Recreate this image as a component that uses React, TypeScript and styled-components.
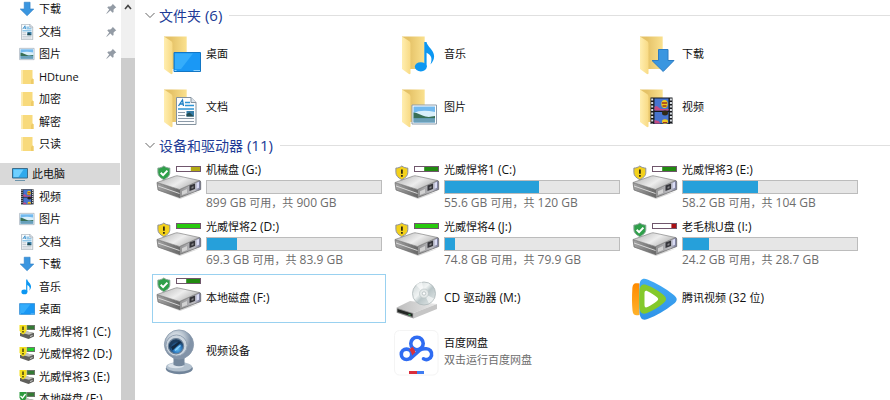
import React from "react";
import styled, { createGlobalStyle } from "styled-components";

const GlobalStyle = createGlobalStyle`
  * { box-sizing: border-box; }
  body {
    margin: 0;
    background: #fff;
    color: #111;
    font-family: "Open Sans", "Noto Sans CJK SC", sans-serif;
    font-size: 11px;
  }
  ul { list-style: none; margin: 0; padding: 0; }
  svg { display: block; flex: none; }
`;

const Window = styled.div`
  display: flex;
  height: 100vh;
  overflow: hidden;
`;

const Sidebar = styled.nav`
  flex: 0 0 121px;
  overflow: hidden;
  margin-top: -2px;
`;

const TreeGroup = styled.ul`
  margin-bottom: 8px;
`;

const TreeRow = styled.li`
  display: flex;
  height: 22px;
  &:nth-child(even) { height: 23px; }
`;

const TreeLink = styled.a<{ $root?: boolean }>`
  display: flex;
  align-items: center;
  gap: 4px;
  flex: 1;
  margin-right: 1px;
  padding: 0 3px 0 ${(p) => (p.$root ? 12 : 19)}px;
  background: ${(p) => (p.$root ? "#d9d9d9" : "transparent")};
  color: inherit;
  text-decoration: none;
  white-space: nowrap;
`;

const TreeName = styled.span`
  flex: 1;
  line-height: 20px;
`;

const Scrollbar = styled.div`
  flex: 0 0 14px;
  display: flex;
  flex-direction: column;
  background: #f0f0f0;
`;

const ScrollUp = styled.button`
  display: flex;
  justify-content: center;
  align-items: center;
  height: 14px;
  padding: 0;
  border: 0;
  background: #f0f0f0;
`;

const ScrollThumb = styled.div`
  flex: 1;
  margin-top: 44px;
  background: #cdcdcd;
`;

const Main = styled.main`
  flex: 1;
  min-width: 0;
  display: flex;
  flex-direction: column;
  gap: 4px;
  padding-top: 6px;
  overflow: hidden;
`;

const GroupButton = styled.button`
  display: flex;
  align-items: center;
  height: 20px;
  padding: 0 0 1px 10px;
  border: 0;
  background: none;
  color: #203a96;
  font: inherit;
  font-size: 14px;
  white-space: nowrap;
  &::after {
    content: "";
    flex: 1;
    height: 1px;
    margin-left: 7px;
    background: #e0e0e0;
  }
`;

const GroupTitle = styled.span`
  margin-left: 4px;
  padding-bottom: 1px;
  line-height: 18px;
`;

const Tiles = styled.ul`
  display: grid;
  grid-template-columns: repeat(auto-fill, 234px);
  gap: 4px;
  padding-left: 17px;
`;

const Tile = styled.button<{ $selected?: boolean }>`
  display: flex;
  align-items: center;
  gap: 4px;
  width: 100%;
  min-height: 49px;
  padding: 0 4px 0 2px;
  border: 0;
  background: none;
  box-shadow: ${(p) => (p.$selected ? "inset 0 0 0 1px #99d1f0" : "none")};
  color: inherit;
  font: inherit;
  text-align: left;
  white-space: nowrap;
`;

const TileBody = styled.span`
  display: flex;
  flex-direction: column;
  flex: 1;
  padding-bottom: 2px;
  line-height: 17px;
`;

const DriveBody = styled(TileBody)`
  line-height: 20px;
  padding-bottom: 1px;
`;

const Detail = styled.span`
  color: #6d6d6d;
`;

const DriveDetail = styled(Detail)`
  line-height: 18px;
`;

const Capacity = styled.span`
  display: block;
  height: 14px;
  border: 1px solid #bcbcbc;
  background: #e6e6e6;
`;

const Used = styled.span`
  display: block;
  height: 100%;
  background: #26a0da;
`;

const LatinRun = styled.span<{ $heading?: boolean }>`
  font-size: ${(p) => (p.$heading ? 15 : 12)}px;
`;

/* Latin runs beside Chinese are set one size larger so both scripts look even. */
function Label({ text, heading }: { text: string; heading?: boolean }) {
  const parts = text.split(/([\x20-\x7e]+)/).filter(Boolean);
  if (parts.length === 1) return <>{text}</>;
  return (
    <>
      {parts.map((part, i) =>
        /^[\x20-\x7e]/.test(part) ? (
          <LatinRun key={i} $heading={heading}>{part}</LatinRun>
        ) : (
          part
        )
      )}
    </>
  );
}

type Kind = "desktop" | "music" | "download" | "document" | "picture" | "video";
type Status = "ok" | "warn";

/* ---------- overlays shared by the folder icons ---------- */

const DownloadArt = () => (
  <path d="M28.5 18.5h9.5v11h6L33.2 40.5 22 29.5h6.5z" fill="#3a96e0" stroke="#2b7cc4" />
);
const MusicArt = () => (
  <>
    <ellipse cx="28.8" cy="35.8" rx="6" ry="4.6" fill="#0c97f2" />
    <path d="M32.3 11h2.2c.8 4.8 7.6 7.8 7.6 14.2 0 3.300-1.600 6.200-3.600 8.200 2-5.600 1-9.400-3.900-11.600V36h-2.300z" fill="#0c97f2" />
  </>
);
const DesktopArt = () => (
  <>
    <path d="M20 21.500h26.500v19H20z" fill="#1a98f5" stroke="#1276c4" />
    <path d="M21 22.500h18L27 38h-6z" fill="#35adfb" />
    <path d="M20.500 39.500h25.500" stroke="#8ed3ff" strokeDasharray="2 17 7" />
  </>
);
const DocumentArt = () => (
  <>
    <path d="M22.500 13.500h14.500l5 5V40.500H22.500z" fill="#fcfdfe" stroke="#84929e" />
    <path d="M37 13.500v5h5" fill="#dde5ec" stroke="#84929e" />
    <path d="M24.500 22l4-6 1 6M26 20h3" fill="none" stroke="#1d7fc4" strokeWidth="1.300" />
    <path d="M31 18.500h5M31 21.500h9M24 25h16" stroke="#2d94d4" strokeWidth="1.400" />
    <path d="M24 28.500h7M24 31.500h7M24 34.500h16M24 37.500h16" stroke="#8c9aa8" />
    <path d="M32.500 27h7.500v5.500h-7.500z" fill="#367da8" />
    <path d="M32.500 32.500v-2.500l3-1.500 4.500 4z" fill="#254d53" />
  </>
);
const PictureArt = () => (
  <>
    <path d="M20 21h24.500v19H20z" fill="#fff" stroke="#8c9cab" />
    <path d="M21.500 22.500h21.500v16H21.500z" fill="#71b9ef" />
    <path d="M21.500 29q8-4 21.500-1v5H21.500z" fill="#d9effb" />
    <path d="M21.500 28.500c4 0 8 3 12 4s6 0 9.500-.5v2.500H21.500z" fill="#386f56" />
    <path d="M21.500 34.500h21.500v4H21.500z" fill="#6a9fb8" />
  </>
);
const VideoArt = () => (
  <>
    <path d="M20.500 13.500h22v26.500h-22z" fill="#17191d" />
    <path d="M22.200 14.500v25M40.900 14.500v25" stroke="#dbe0e6" strokeWidth="2" strokeDasharray="2 1.500" />
    <path d="M24.500 14.500h14v12h-14zM24.500 28h14v11.500h-14z" fill="#4774cf" />
    <path d="M24.500 23c3-3 4 2 7 2h7v1.500h-14zM24.500 36l4 1 2 2.500h-6z" fill="#c44b82" />
    <ellipse cx="34.500" cy="20" rx="3.200" ry="4" fill="#edcc1c" />
    <path d="M32 19h5M32.500 22h4" stroke="#a3321c" strokeWidth="1.500" />
    <ellipse cx="35" cy="29" rx="3" ry="2.500" fill="#302816" />
    <ellipse cx="35" cy="37.500" rx="3" ry="2.200" fill="#f0c921" />
    <path d="M33 38.500h4" stroke="#a3321c" />
  </>
);

const art: Record<Kind, () => React.ReactElement> = {
  desktop: DesktopArt,
  music: MusicArt,
  download: DownloadArt,
  document: DocumentArt,
  picture: PictureArt,
  video: VideoArt,
};

const smallBox: Record<Kind, string> = {
  desktop: "19 17 28 28",
  music: "20 10 28 32",
  download: "20 17 26 25",
  document: "18 13 28 28",
  picture: "19 18 27 25",
  video: "17 13 28 28",
};

function FolderIcon({ kind }: { kind: Kind }) {
  const Art = art[kind];
  return (
    <svg width="48" height="48" viewBox="0 0 48 48" aria-hidden="true">
      <defs>
        <linearGradient id="fold-back" x1="0" x2="1">
          <stop offset=".3" stopColor="#e5c267" />
          <stop offset="1" stopColor="#fae18f" />
        </linearGradient>
        <linearGradient id="fold-front" x1="0" x2="1">
          <stop offset="0" stopColor="#ffeeb0" />
          <stop offset="1" stopColor="#f8da84" />
        </linearGradient>
      </defs>
      <path d="M10 5.500h22.700V38H10z" fill="url(#fold-back)" />
      <path d="M10 5.500l7 4.500c1 .7 1.500 1.500 1.500 3V42c0 1.300-1 1.500-2 .7L10 38z" fill="url(#fold-front)" />
      <Art />
    </svg>
  );
}

function SmallIcon({ kind }: { kind: Kind }) {
  const Art = art[kind];
  return (
    <svg width="16" height="16" viewBox={smallBox[kind]} aria-hidden="true">
      <Art />
    </svg>
  );
}

const SmallFolder = () => (
  <svg width="16" height="16" viewBox="0 0 16 16" aria-hidden="true">
    <path d="M2.500 1h11v8.500l1 .8V15h-12z" fill="#f8da7c" />
    <path d="M2.500 1h1.500v14H2.500z" fill="#fdeaa9" />
    <path d="M12 15v-4l1.500-1.500 1 .8V15z" fill="#eecb68" />
  </svg>
);

const ComputerIcon = () => (
  <svg width="16" height="16" viewBox="0 0 16 16" aria-hidden="true">
    <path d="M.5 2.500h15v9.500H.5z" fill="#2fa9ec" stroke="#3c6c8a" />
    <path d="M1.500 3.500h10l-5 7.500h-5z" fill="#6fd0ff" />
    <path d="M3 14.500h10" stroke="#6c94ab" />
  </svg>
);

const PinIcon = () => (
  <svg width="11" height="12" viewBox="0 0 11 12" aria-hidden="true">
    <path d="M6.700.8l3.600 3.800-1.200.4-1.600 1.800.1 2.200-1 .8L4.400 7.600.8 10.700l-.5-.2L3.200 6.400 1.300 4.400l.9-1 2.100.2L6.200 2z" fill="#939ba5" />
  </svg>
);

const Shield = ({ status }: { status: Status }) => (
  <>
    <path
      d="M9.800 3c2 1.500 3.900 2 6 2.100v4.500c0 3-2.200 5.200-6 7.100-3.700-1.900-5.900-4.100-5.900-7.100V5.100C6 5 7.900 4.500 9.800 3z"
      fill={status === "ok" ? "#2fa04a" : "#f3d11b"}
      stroke={status === "ok" ? "#87a595" : "#8b8f9b"}
    />
    {status === "ok" ? (
      <path d="M6.700 9.700l2.400 2.400 4.300-4.500" fill="none" stroke="#fff" strokeWidth="2" />
    ) : (
      <path d="M9.900 6.500v4.200M9.900 12v1.800" stroke="#332c12" strokeWidth="1.800" />
    )}
  </>
);

interface Gauge {
  status: Status;
  color: string;
  from: number;
}

function DriveIcon({ status, color, from }: Gauge) {
  return (
    <svg width="48" height="48" viewBox="0 0 48 48" aria-hidden="true">
      <defs>
        <linearGradient id="drv-top" x1="0" x2="1" y2=".5">
          <stop offset="0" stopColor="#b0b0b0" />
          <stop offset=".6" stopColor="#ededed" />
          <stop offset="1" stopColor="#b5b5b5" />
        </linearGradient>
        <linearGradient id="drv-left" x1="0" x2="1">
          <stop offset="0" stopColor="#a4a4a4" />
          <stop offset="1" stopColor="#686868" />
        </linearGradient>
        <linearGradient id="drv-right" x1="0" x2="1">
          <stop offset="0" stopColor="#929292" />
          <stop offset=".7" stopColor="#bfbfc4" />
          <stop offset="1" stopColor="#75789d" />
        </linearGradient>
      </defs>
      <path d="M3.500 27L26 36l20-7.500-20 5z" fill="#b9b9b9" opacity=".6" />
      <path d="M3 19.500l22.500 7V34.500L4 27z" fill="url(#drv-left)" stroke="#686868" strokeWidth=".7" />
      <path d="M25.500 26.500L45 17.500q1.700 0 1.700 1.500v7.500L25.500 34.500z" fill="url(#drv-right)" stroke="#626262" strokeWidth=".7" />
      <path d="M3 19.500L21.500 13q1.500-.5 3 0L45.500 17.500l-20 9z" fill="url(#drv-top)" stroke="#858585" strokeWidth=".7" />
      <path d="M4 23l21.500 7.500" stroke="#d8d8d8" />
      <path d="M28 28.200L33 26v4l-5 2z" fill="#d2d2d2" />
      <path d="M35.500 22.500l5.500-2v5.500l-5.500 2z" fill="#35353a" />
      <path d="M37.500 24l2-1v2l-2 .8z" fill="#868689" />
      <path d="M42.500 20l2.500-1.200v6l-2.500 1z" fill="#dadcf4" />
      <rect x="22.500" y="3.500" width="24" height="5" fill="#fff" stroke="#70566c" />
      <rect x={23 + from * 23} y="4" width={23 * (1 - from)} height="4" fill={color} />
      <Shield status={status} />
    </svg>
  );
}

function SmallDrive({ status, color }: { status: Status; color: string }) {
  return (
    <svg width="16" height="16" viewBox="0 0 16 16" aria-hidden="true">
      <path d="M1 9l7-1.500 7 1.500v3.500l-5.500 2.500L1 12z" fill="#60605c" />
      <path d="M3 9l5-1.500 6.500 1.300-4.500 2z" fill="#c3c3bd" />
      <path d="M11 12.500l2.500-1" stroke="#ccc" />
      <rect x="8" y="1.500" width="7.500" height="4" fill={color} stroke="#6c7669" />
      <path
        d="M.5 1h7v5.500q-1 3-3.500 4-2.500-1-3.500-4z"
        fill={status === "ok" ? "#2d9b3e" : "#f3df1e"}
      />
      {status === "ok" ? (
        <path d="M1.500 5l2 2 3-4" stroke="#fff" fill="none" strokeWidth="1.300" />
      ) : (
        <path d="M4 2.500V6M4 7v1.500" stroke="#46400d" strokeWidth="1.500" />
      )}
    </svg>
  );
}

const DiscIcon = () => (
  <svg width="48" height="48" viewBox="0 0 48 48" aria-hidden="true">
    <defs>
      <linearGradient id="disc" x2="1" y2="1">
        <stop offset="0" stopColor="#c7d0d1" />
        <stop offset=".4" stopColor="#f1f4f4" />
        <stop offset=".55" stopColor="#bac6c8" />
        <stop offset="1" stopColor="#e9eded" />
      </linearGradient>
      <linearGradient id="disc-body" x2="1">
        <stop offset="0" stopColor="#bdbdbd" />
        <stop offset="1" stopColor="#e9e9e9" />
      </linearGradient>
    </defs>
    <path d="M4.700 32.500L18 26l27 3-23.500 9z" fill="url(#disc-body)" />
    <path d="M21.500 38L45 29v5L21.500 43.500z" fill="#c6c6c6" />
    <path d="M4.700 32.500l16.800 5.500v5.500L4.700 37.800z" fill="#929292" />
    <path d="M5.500 34l15 4.800v3L5.500 37z" fill="#232724" />
    <path d="M16.500 39.500l2 .6" stroke="#4ac265" strokeWidth="1.300" />
    <circle cx="32" cy="18.500" r="11.500" fill="url(#disc)" stroke="#adb7b9" strokeWidth=".8" />
    <path d="M32 18.500L24 10a12 12 0 0 1 6-3zM32 18.500l10 5a12 12 0 0 1-5 5z" fill="#fff" opacity=".6" />
    <circle cx="32" cy="18.500" r="4.500" fill="#e4e9e9" stroke="#bac3c4" strokeWidth=".7" />
    <circle cx="32" cy="18.500" r="1.700" fill="#fff" stroke="#9eaaac" strokeWidth=".6" />
  </svg>
);

const TencentIcon = () => (
  <svg width="48" height="48" viewBox="0 0 48 48" aria-hidden="true">
    <defs>
      <linearGradient id="tv-blue" x2="0" y2="1">
        <stop offset="0" stopColor="#42aaf4" />
        <stop offset="1" stopColor="#2f93e8" />
      </linearGradient>
      <linearGradient id="tv-orange" x2="0" y2="1">
        <stop offset="0" stopColor="#ff8a00" />
        <stop offset="1" stopColor="#ffb22b" />
      </linearGradient>
    </defs>
    <path d="M9.500 8.500C4 7.500 2.500 9 2.300 14.500c-.4 7-.4 14 .2 21C3 40 5 41 9.500 40z" fill="url(#tv-orange)" />
    <path d="M9.500 11c0-6 3-8.500 8-6.500 9 3.500 17.500 8.500 26 15.200 4.300 3.500 4.300 6 0 9.400-8.500 6.700-17 11.700-26 14.900-5 2-7.500-.5-8-6.500z" fill="url(#tv-blue)" />
    <path d="M9.500 16c.2-5 2.300-7.500 7-6 6 2.200 11.300 5.300 16.500 9.500 4 3.300 4 5.800 0 9-5 4.200-10.500 7.500-16.500 9.700-4.500 1.500-6.700-.8-7-5.700-.4-5.500-.4-11 0-16.500z" fill="#84c92b" />
    <path d="M14.500 18.500c0-2.500 1-3.200 3-2.200 3.500 1.700 6.500 3.700 9.500 6 1.600 1.300 1.600 2.400 0 3.700-3 2.300-6 4.200-9.500 6-2 1-3 .3-3-2.200z" fill="#fff" />
  </svg>
);

const BaiduIcon = () => (
  <svg width="48" height="48" viewBox="0 0 48 48" aria-hidden="true">
    <rect x="2.500" y="2.500" width="43.500" height="44.500" rx="5" fill="#fff" stroke="#f4f4f4" />
    <g fill="none" stroke="#2f6cf2" strokeWidth="3.600" strokeLinecap="round">
      <circle cx="25" cy="15.500" r="6.200" />
      <circle cx="14.500" cy="26.300" r="5.200" />
      <path d="M18.500 30.500l9.500-8.500q2.500-1.500 6-1.200a5.400 5.400 0 1 1-2.500 10" />
    </g>
    <path d="M17.300 21.500l3.200-2.800 1.800 2.500 1.200 3-3.300 3.400q-.5-3.400-2.900-6.100z" fill="#d8323c" />
    <path d="M17 43h8v3h-8z" fill="#d92e3b" />
    <path d="M25 43h7v3h-7z" fill="#3f7df2" />
  </svg>
);

const WebcamIcon = () => (
  <svg width="48" height="48" viewBox="0 0 48 48" aria-hidden="true">
    <defs>
      <radialGradient id="cam-shell" cx=".4" cy=".3">
        <stop offset="0" stopColor="#f5f8fb" />
        <stop offset=".6" stopColor="#b7c3cf" />
        <stop offset="1" stopColor="#8293a8" />
      </radialGradient>
      <radialGradient id="cam-lens" cx=".6" cy=".7">
        <stop offset="0" stopColor="#5fbcf5" />
        <stop offset=".6" stopColor="#2a73b8" />
        <stop offset="1" stopColor="#1b3c5e" />
      </radialGradient>
    </defs>
    <ellipse cx="25.300" cy="40.500" rx="13.500" ry="5.800" fill="#71849a" />
    <ellipse cx="25" cy="38.800" rx="13" ry="4.800" fill="#b3c1ce" />
    <ellipse cx="22" cy="37.800" rx="8" ry="2.500" fill="#dbe3eb" />
    <path d="M19.500 30h11v7q-5.500 2.500-11 0z" fill="#74879c" />
    <circle cx="25" cy="16.500" r="14.600" fill="url(#cam-shell)" stroke="#8595a8" strokeWidth=".8" />
    <circle cx="22.500" cy="17.500" r="10.600" fill="#cbd5df" stroke="#93a2b3" />
    <circle cx="22" cy="18.200" r="7.600" fill="url(#cam-lens)" stroke="#6b8198" strokeWidth="1.200" />
    <path d="M17 19l8-5.500 2 1-8.500 8z" fill="#122a42" />
    <path d="M21 22.500l5.500-5" stroke="#8bd4fb" strokeWidth="1.300" />
  </svg>
);

/* ---------- data ---------- */

const quick: { name: string; icon: React.ReactNode; pinned?: boolean }[] = [
  { name: "下载", icon: <SmallIcon kind="download" />, pinned: true },
  { name: "文档", icon: <SmallIcon kind="document" />, pinned: true },
  { name: "图片", icon: <SmallIcon kind="picture" />, pinned: true },
  { name: "HDtune", icon: <SmallFolder /> },
  { name: "加密", icon: <SmallFolder /> },
  { name: "解密", icon: <SmallFolder /> },
  { name: "只读", icon: <SmallFolder /> },
];

const computer: { name: string; icon: React.ReactNode; root?: boolean }[] = [
  { name: "此电脑", icon: <ComputerIcon />, root: true },
  { name: "视频", icon: <SmallIcon kind="video" /> },
  { name: "图片", icon: <SmallIcon kind="picture" /> },
  { name: "文档", icon: <SmallIcon kind="document" /> },
  { name: "下载", icon: <SmallIcon kind="download" /> },
  { name: "音乐", icon: <SmallIcon kind="music" /> },
  { name: "桌面", icon: <SmallIcon kind="desktop" /> },
  { name: "光威悍将1 (C:)", icon: <SmallDrive status="warn" color="#347a35" /> },
  { name: "光威悍将2 (D:)", icon: <SmallDrive status="warn" color="#20d02c" /> },
  { name: "光威悍将3 (E:)", icon: <SmallDrive status="warn" color="#347a35" /> },
  { name: "本地磁盘 (F:)", icon: <SmallDrive status="ok" color="#347a35" /> },
];

const folders: { name: string; kind: Kind }[] = [
  { name: "桌面", kind: "desktop" },
  { name: "音乐", kind: "music" },
  { name: "下载", kind: "download" },
  { name: "文档", kind: "document" },
  { name: "图片", kind: "picture" },
  { name: "视频", kind: "video" },
];

const drives: { name: string; detail: string; used: number; gauge: Gauge }[] = [
  { name: "机械盘 (G:)", detail: "899 GB 可用，共 900 GB", used: 0, gauge: { status: "ok", color: "#b3aa14", from: 0.6 } },
  { name: "光威悍将1 (C:)", detail: "55.6 GB 可用，共 120 GB", used: 54, gauge: { status: "warn", color: "#218a10", from: 0.4 } },
  { name: "光威悍将3 (E:)", detail: "58.2 GB 可用，共 104 GB", used: 43, gauge: { status: "warn", color: "#218a10", from: 0.4 } },
  { name: "光威悍将2 (D:)", detail: "69.3 GB 可用，共 83.9 GB", used: 17, gauge: { status: "warn", color: "#28c90e", from: 0 } },
  { name: "光威悍将4 (J:)", detail: "74.8 GB 可用，共 79.9 GB", used: 6, gauge: { status: "warn", color: "#28c90e", from: 0 } },
  { name: "老毛桃U盘 (I:)", detail: "24.2 GB 可用，共 28.7 GB", used: 15, gauge: { status: "ok", color: "#a90f14", from: 0.8 } },
];

const devices: { name: string; icon: React.ReactNode; detail?: string; selected?: boolean }[] = [
  { name: "本地磁盘 (F:)", icon: <DriveIcon status="ok" color="#218a10" from={0.4} />, selected: true },
  { name: "CD 驱动器 (M:)", icon: <DiscIcon /> },
  { name: "腾讯视频 (32 位)", icon: <TencentIcon /> },
  { name: "视频设备", icon: <WebcamIcon /> },
  { name: "百度网盘", icon: <BaiduIcon />, detail: "双击运行百度网盘" },
];

function GroupHeader({ title }: { title: string }) {
  return (
    <GroupButton type="button" aria-expanded="true">
      <svg width="10" height="7" viewBox="0 0 10 7" aria-hidden="true">
        <path d="M.5 1L5 5.500 9.500 1" fill="none" stroke="#666" />
      </svg>
      <GroupTitle><Label text={title} heading /></GroupTitle>
    </GroupButton>
  );
}

export default function App() {
  return (
    <>
      <GlobalStyle />
      <Window>
        <Sidebar>
          <TreeGroup>
            {quick.map((entry) => (
              <TreeRow key={entry.name}>
                <TreeLink href="#">
                  {entry.icon}
                  <TreeName><Label text={entry.name} /></TreeName>
                  {entry.pinned && <PinIcon />}
                </TreeLink>
              </TreeRow>
            ))}
          </TreeGroup>
          <TreeGroup>
            {computer.map((entry) => (
              <TreeRow key={entry.name}>
                <TreeLink href="#" $root={entry.root}>
                  {entry.icon}
                  <TreeName><Label text={entry.name} /></TreeName>
                </TreeLink>
              </TreeRow>
            ))}
          </TreeGroup>
        </Sidebar>
        <Scrollbar>
          <ScrollUp type="button" aria-label="向上滚动">
            <svg width="8" height="6" viewBox="0 0 8 6" aria-hidden="true">
              <path d="M1 5l3-3.500L7 5" fill="none" stroke="#444" strokeWidth="1.600" />
            </svg>
          </ScrollUp>
          <ScrollThumb />
        </Scrollbar>
        <Main>
          <GroupHeader title="文件夹 (6)" />
          <Tiles>
            {folders.map((f) => (
              <li key={f.name}>
                <Tile type="button">
                  <FolderIcon kind={f.kind} />
                  <TileBody>{f.name}</TileBody>
                </Tile>
              </li>
            ))}
          </Tiles>
          <GroupHeader title="设备和驱动器 (11)" />
          <Tiles>
            {drives.map((d) => (
              <li key={d.name}>
                <Tile type="button">
                  <DriveIcon {...d.gauge} />
                  <DriveBody>
                    <span><Label text={d.name} /></span>
                    <Capacity role="meter" aria-label={d.name} aria-valuenow={d.used} aria-valuemin={0} aria-valuemax={100}>
                      <Used style={{ width: `${d.used}%` }} />
                    </Capacity>
                    <DriveDetail><Label text={d.detail} /></DriveDetail>
                  </DriveBody>
                </Tile>
              </li>
            ))}
            {devices.map((d) => (
              <li key={d.name}>
                <Tile type="button" $selected={d.selected}>
                  {d.icon}
                  <TileBody>
                    <span><Label text={d.name} /></span>
                    {d.detail && <Detail>{d.detail}</Detail>}
                  </TileBody>
                </Tile>
              </li>
            ))}
          </Tiles>
        </Main>
      </Window>
    </>
  );
}
